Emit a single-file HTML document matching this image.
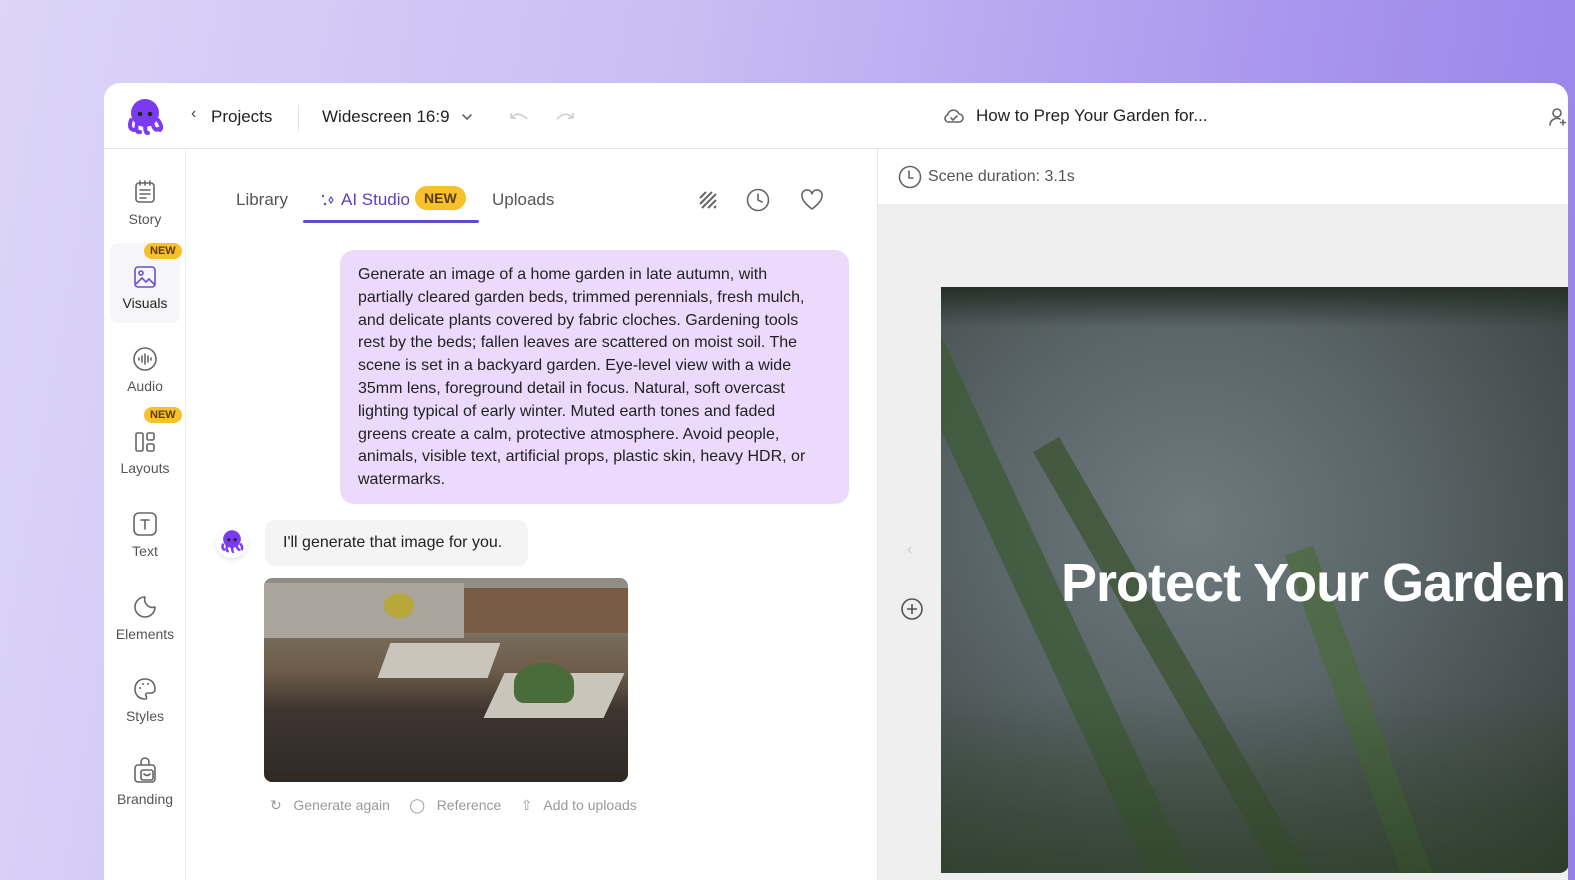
<!DOCTYPE html>
<html><head><meta charset="utf-8"><style>
*{box-sizing:border-box;margin:0;padding:0}
html,body{width:1575px;height:880px;overflow:hidden}
body{font-family:"Liberation Sans",sans-serif;background:linear-gradient(100deg,#dcd5f8 0%,#c9bdf3 40%,#a996ee 75%,#9580e8 100%);position:relative}
.win{position:absolute;left:104px;top:83px;width:1464px;height:797px;background:#fff;border-radius:16px 16px 0 0;overflow:hidden}
.hdr{position:absolute;left:0;top:0;right:0;height:66px;border-bottom:1px solid #e6e6e6}
.t{position:absolute;white-space:nowrap}
.side{position:absolute;left:0;top:66px;width:82px;bottom:0;border-right:1px solid #ececec}
.si{position:absolute;left:6px;width:70px;height:76px;text-align:center;font-size:14px;color:#555}
.si svg{display:block;margin:0 auto 6px}
.new{position:absolute;background:#f7c12b;color:#5a3a00;font-size:11px;font-weight:bold;border-radius:9px;padding:2px 6px}
.panel{position:absolute;left:82px;top:66px;width:690px;bottom:0;overflow:hidden}
.right{position:absolute;left:773px;top:66px;right:0;bottom:0;background:#efefef;border-left:1px solid #e6e6e6;overflow:hidden}
.ic{stroke:#666;fill:none;stroke-width:1.6;stroke-linecap:round;stroke-linejoin:round}
</style></head><body>
<div class="win">
 <div class="hdr">
  <svg style="position:absolute;left:22px;top:13px" width="38" height="40" viewBox="0 0 38 40"><ellipse cx="19" cy="17" rx="14" ry="14" fill="#7b3bf0"/><path d="M5 24 Q2 33 8 34 M11 27 Q9 37 14 36 M19 28 Q19 38 22 37 M26 27 Q29 36 32 33 M32 24 Q37 31 34 34" stroke="#7b3bf0" stroke-width="4" fill="none" stroke-linecap="round"/><circle cx="14" cy="18" r="2.3" fill="#222"/><circle cx="24" cy="18" r="2.3" fill="#222"/></svg>
  <div class="t" style="left:87px;top:22px;font-size:16px;color:#444">‹</div>
  <div class="t" style="left:107px;top:24px;font-size:17px;color:#222">Projects</div>
  <div style="position:absolute;left:194px;top:22px;width:1px;height:26px;background:#e3e3e3"></div>
  <div class="t" style="left:218px;top:24px;font-size:17px;color:#222">Widescreen 16:9</div>
  <svg style="position:absolute;left:357px;top:29px" width="12" height="10"><path d="M2 3l4 4 4-4" class="ic" stroke="#555"/></svg>
  <svg style="position:absolute;left:404px;top:27px" width="22" height="14"><path d="M3 8 Q10 0 19 9 M3 8V3M3 8h5" stroke="#ccc" fill="none" stroke-width="1.5"/></svg>
  <svg style="position:absolute;left:450px;top:27px" width="22" height="14"><path d="M19 8 Q12 0 3 9 M19 8V3M19 8h-5" stroke="#ccc" fill="none" stroke-width="1.5"/></svg>
  <svg style="position:absolute;left:839px;top:24px" width="22" height="18" viewBox="0 0 22 18"><path d="M6 15h10a4 4 0 0 0 0-8 6 6 0 0 0-11.5 1A3.6 3.6 0 0 0 6 15z" class="ic"/><path d="M8 11l2 2 4-4" class="ic"/></svg>
  <div class="t" style="left:872px;top:23px;font-size:17px;color:#222">How to Prep Your Garden for...</div>
  <svg style="position:absolute;left:1444px;top:24px" width="20" height="20"><circle cx="9" cy="6" r="4" class="ic"/><path d="M2 18a7 7 0 0 1 10-6M15 13v5M12.5 15.5h5" class="ic"/></svg>
 </div>
 <div class="side">
  <div class="si" style="top:30px"><svg width="24" height="26" viewBox="0 0 24 26"><rect x="3" y="4" width="18" height="19" rx="3" class="ic"/><path d="M7 2v4M12 2v4M17 2v4M7 11h10M7 15h10M7 19h6" class="ic"/></svg>Story</div>
  <div class="si" style="top:94px;height:80px;background:#f6f6f8;border-radius:8px;padding-top:22px;color:#222"><svg width="24" height="24" viewBox="0 0 24 24"><rect x="2" y="2" width="20" height="20" rx="3" stroke="#6a4fd0" fill="none" stroke-width="1.6"/><circle cx="8" cy="8" r="2" stroke="#6a4fd0" fill="none" stroke-width="1.6"/><path d="M3 19l6-6 4 4 3-3 6 6" stroke="#6a4fd0" fill="none" stroke-width="1.6"/></svg>Visuals</div>
  <div class="new" style="left:40px;top:94px">NEW</div>
  <div class="si" style="top:197px"><svg width="26" height="26" viewBox="0 0 26 26"><circle cx="13" cy="13" r="11" class="ic"/><path d="M7 12v2M10 10v6M13 8v10M16 10v6M19 12v2" class="ic"/></svg>Audio</div>
  <div class="si" style="top:281px"><svg width="22" height="24" viewBox="0 0 22 24"><rect x="2" y="3" width="7" height="18" rx="1.5" class="ic"/><rect x="13" y="3" width="7" height="7" rx="1.5" class="ic"/><rect x="13" y="14" width="7" height="7" rx="1.5" class="ic"/></svg>Layouts</div>
  <div class="new" style="left:40px;top:258px">NEW</div>
  <div class="si" style="top:362px"><svg width="26" height="26" viewBox="0 0 26 26"><rect x="2" y="2" width="22" height="22" rx="5" class="ic"/><path d="M9 9h8M13 9v9" class="ic"/></svg>Text</div>
  <div class="si" style="top:445px"><svg width="26" height="26" viewBox="0 0 26 26"><path d="M13 3a10 10 0 1 0 10 10 A8 8 0 0 1 13 3z" class="ic"/></svg>Elements</div>
  <div class="si" style="top:527px"><svg width="26" height="26" viewBox="0 0 26 26"><path d="M13 3C7 3 3 7 3 13s4 10 10 10c2 0 2-2 1-3s0-3 2-3h3c3 0 4-2 4-4 0-6-4-10-10-10z" class="ic"/><circle cx="8" cy="12" r="1" fill="#666"/><circle cx="11" cy="8" r="1" fill="#666"/><circle cx="16" cy="8" r="1" fill="#666"/></svg>Styles</div>
  <div class="si" style="top:608px"><svg width="26" height="28" viewBox="0 0 26 28"><path d="M9 8V5a4 4 0 0 1 8 0v3" class="ic"/><rect x="3" y="8" width="20" height="17" rx="3" class="ic"/><rect x="9" y="13" width="12" height="10" rx="2" class="ic"/><path d="M12 17q3 3 6 0" class="ic"/></svg>Branding</div>
 </div>
 <div class="panel">
  <div class="t" style="left:50px;top:41px;font-size:17px;color:#555">Library</div>
  <svg style="position:absolute;left:134px;top:43px" width="16" height="16"><circle cx="3" cy="4" r="1.2" fill="#6a4fd0"/><circle cx="5" cy="12" r="1.3" fill="#6a4fd0"/><path d="M11 5l2 3-2 3-2-3z" fill="none" stroke="#6a4fd0" stroke-width="1.2"/></svg>
  <div class="t" style="left:155px;top:41px;font-size:17px;color:#5a3fc8">AI Studio</div>
  <div class="t" style="left:229px;top:37px;background:#f7c12b;color:#5a3a00;font-size:14px;font-weight:bold;border-radius:13px;padding:4px 9px">NEW</div>
  <div style="position:absolute;left:117px;top:71px;width:176px;height:3px;background:#5f4ccc;border-radius:2px"></div>
  <div class="t" style="left:306px;top:41px;font-size:17px;color:#555">Uploads</div>
  <svg style="position:absolute;left:512px;top:41px" width="20" height="20"><path d="M2 8l6-6M2 14L14 2M4 18L18 4M10 18l8-8M16 18l2-2" stroke="#666" stroke-width="2"/></svg>
  <svg style="position:absolute;left:560px;top:39px" width="24" height="24"><circle cx="12" cy="12" r="10.5" class="ic"/><path d="M12 6v6l4 2" class="ic"/></svg>
  <svg style="position:absolute;left:614px;top:40px" width="24" height="22"><path d="M12 20S2 13 2 7a5 5 0 0 1 10-2 5 5 0 0 1 10 2c0 6-10 13-10 13z" class="ic"/></svg>
  <div style="position:absolute;left:154px;top:101px;width:509px;height:254px;background:#ebdafb;border-radius:14px;padding:14px 18px;font-size:16px;line-height:22.8px;color:#222;white-space:nowrap">Generate an image of a home garden in late autumn, with<br>partially cleared garden beds, trimmed perennials, fresh mulch,<br>and delicate plants covered by fabric cloches. Gardening tools<br>rest by the beds; fallen leaves are scattered on moist soil. The<br>scene is set in a backyard garden. Eye-level view with a wide<br>35mm lens, foreground detail in focus. Natural, soft overcast<br>lighting typical of early winter. Muted earth tones and faded<br>greens create a calm, protective atmosphere. Avoid people,<br>animals, visible text, artificial props, plastic skin, heavy HDR, or<br>watermarks.</div>
  <div style="position:absolute;left:30px;top:377px;width:32px;height:32px;border-radius:50%;background:#fff;box-shadow:0 2px 4px rgba(0,0,0,.1)"></div>
  <svg style="position:absolute;left:34px;top:379px" width="24" height="26" viewBox="0 0 38 40"><ellipse cx="19" cy="17" rx="14" ry="14" fill="#7b3bf0"/><path d="M5 24 Q2 33 8 34 M11 27 Q9 37 14 36 M19 28 Q19 38 22 37 M26 27 Q29 36 32 33 M32 24 Q37 31 34 34" stroke="#7b3bf0" stroke-width="4" fill="none"/><circle cx="14" cy="18" r="2.5" fill="#222"/><circle cx="24" cy="18" r="2.5" fill="#222"/></svg>
  <div style="position:absolute;left:79px;top:371px;width:263px;height:46px;background:#f4f4f5;border-radius:10px;font-size:16px;color:#222;padding:14px 18px;white-space:nowrap">I'll generate that image for you.</div>
  <div style="position:absolute;left:78px;top:429px;width:364px;height:204px;border-radius:8px;overflow:hidden;background:linear-gradient(180deg,#8d8b85 0%,#a29a8c 12%,#776a58 30%,#6d5d4a 45%,#3e3530 65%,#2f2924 100%)">
   <div style="position:absolute;left:0;top:5px;width:200px;height:55px;background:#a9a49c"></div>
   <div style="position:absolute;left:200px;top:10px;width:164px;height:45px;background:#7a5c44"></div>
   <div style="position:absolute;left:120px;top:65px;width:110px;height:35px;background:#c9c5bb;transform:skewX(-20deg)"></div>
   <div style="position:absolute;left:230px;top:95px;width:120px;height:45px;background:#c9c5bb;transform:skewX(-25deg)"></div>
   <div style="position:absolute;left:250px;top:85px;width:60px;height:40px;background:#4a6b3a;border-radius:50% 50% 10px 10px"></div>
   <div style="position:absolute;left:120px;top:15px;width:30px;height:25px;background:#b7a83a;border-radius:50%"></div>
  </div>
  <div class="t" style="left:84px;top:648px;font-size:14px;color:#999">↻&nbsp;&nbsp; Generate again &nbsp;&nbsp;&nbsp;&nbsp;◯&nbsp;&nbsp; Reference &nbsp;&nbsp;&nbsp;&nbsp;⇧&nbsp;&nbsp; Add to uploads</div>
 </div>
 <div class="right">
  <div style="position:absolute;left:0;top:0;right:0;height:56px;background:#fff;border-bottom:1px solid #ececec"></div>
  <svg style="position:absolute;left:20px;top:16px" width="24" height="24"><circle cx="12" cy="12" r="10.5" class="ic"/><path d="M11 6v7h4" class="ic"/></svg>
  <div class="t" style="left:50px;top:19px;font-size:16px;color:#555">Scene duration: 3.1s</div>
  <div class="t" style="left:29px;top:392px;font-size:16px;color:#ccc">‹</div>
  <svg style="position:absolute;left:22px;top:448px" width="24" height="24"><circle cx="12" cy="12" r="10" stroke="#555" fill="none" stroke-width="1.6"/><path d="M12 7v10M7 12h10" stroke="#555" stroke-width="1.6"/></svg>
  <div style="position:absolute;left:63px;top:138px;width:628px;height:586px;border-radius:0 0 10px 0;overflow:hidden;background:radial-gradient(ellipse at 40% 40%,#6e7a7e 0%,#5a6568 40%,#414a48 80%,#2e3530 100%)">
   <div style="position:absolute;left:0;top:0;right:0;height:40px;background:linear-gradient(#263028,rgba(38,48,40,0))"></div>
   <div style="position:absolute;left:80px;top:-40px;width:40px;height:700px;background:#3f5a38;transform:rotate(-25deg);opacity:.8"></div>
   <div style="position:absolute;left:230px;top:120px;width:30px;height:560px;background:#3d5535;transform:rotate(-30deg);opacity:.8"></div>
   <div style="position:absolute;left:420px;top:250px;width:30px;height:450px;background:#4a6a3a;transform:rotate(-20deg);opacity:.7"></div>
   <div style="position:absolute;left:0;bottom:0;right:0;height:180px;background:linear-gradient(rgba(50,70,45,0),rgba(45,65,40,.7))"></div>
   <div class="t" style="left:120px;top:265px;font-size:54px;font-weight:bold;color:#fff;letter-spacing:-1px">Protect Your Garden</div>
  </div>
 </div>
</div>
</body></html>
